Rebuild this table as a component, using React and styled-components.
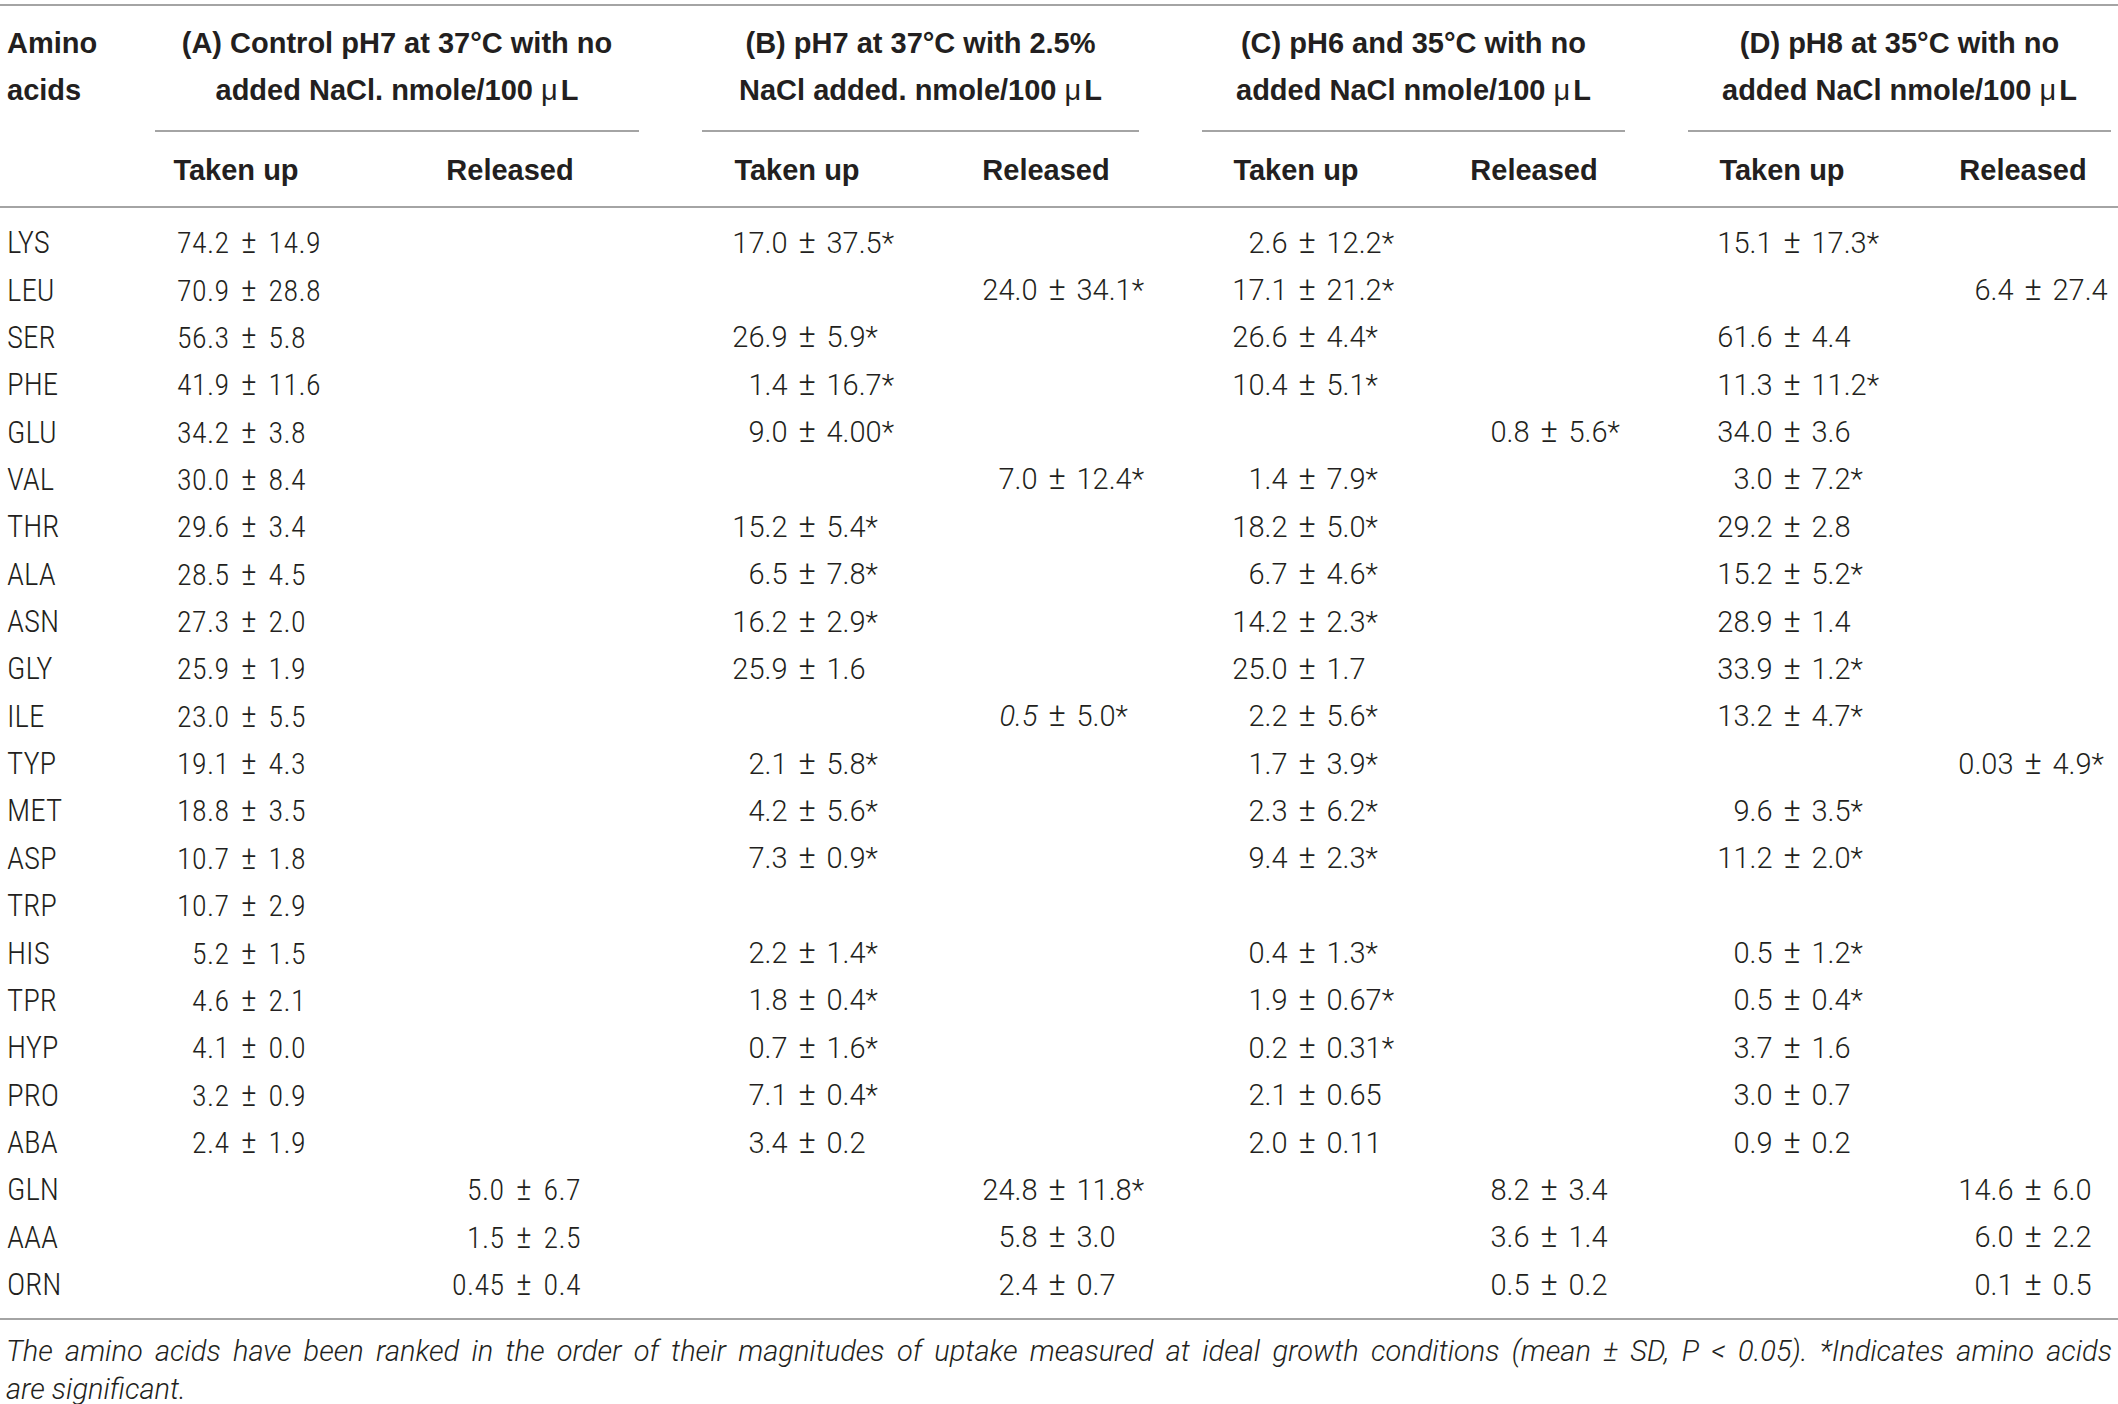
import React from "react";
import styled, { createGlobalStyle } from "styled-components";

const GlobalStyle = createGlobalStyle`
  body {
    margin: 0;
    background: #ffffff;
    color: #231f20;
    font-family: "Liberation Sans", Arial, sans-serif;
  }
`;

const NARROW = `"Liberation Sans Narrow", "Roboto Condensed", "DejaVu Sans Condensed", "Liberation Sans", sans-serif`;
const LIGHT = `Roboto, "Liberation Sans", sans-serif`;
const RULE = "#a4a4a4";
const ROW_H = 47.36;
const PM_W = 39;

// head: centre of sub-header text, vals: centre of the ± sign (both from cell start)
const groups = [
  {
    lines: ["(A) Control pH7 at 37°C with no", "added NaCl. nmole/100 "],
    width: 484,
    taken: 275,
    head: [81, 80],
    vals: [94, 94],
    narrow: true,
  },
  {
    lines: ["(B) pH7 at 37°C with 2.5%", "NaCl added. nmole/100 "],
    width: 437,
    taken: 258,
    head: [95, 86],
    vals: [105, 97],
  },
  {
    lines: ["(C) pH6 and 35°C with no", "added NaCl nmole/100 "],
    width: 423,
    taken: 248,
    head: [94, 84],
    vals: [105, 99],
  },
  {
    lines: ["(D) pH8 at 35°C with no", "added NaCl nmole/100 "],
    width: 423,
    taken: 247,
    head: [94, 88],
    vals: [104, 98],
  },
];

// each row: name, then taken/released pairs for groups A..D
const rows = [
  ["LYS", ["74.2", "14.9"], null, ["17.0", "37.5*"], null, ["2.6", "12.2*"], null, ["15.1", "17.3*"], null],
  ["LEU", ["70.9", "28.8"], null, null, ["24.0", "34.1*"], ["17.1", "21.2*"], null, null, ["6.4", "27.4"]],
  ["SER", ["56.3", "5.8"], null, ["26.9", "5.9*"], null, ["26.6", "4.4*"], null, ["61.6", "4.4"], null],
  ["PHE", ["41.9", "11.6"], null, ["1.4", "16.7*"], null, ["10.4", "5.1*"], null, ["11.3", "11.2*"], null],
  ["GLU", ["34.2", "3.8"], null, ["9.0", "4.00*"], null, null, ["0.8", "5.6*"], ["34.0", "3.6"], null],
  ["VAL", ["30.0", "8.4"], null, null, ["7.0", "12.4*"], ["1.4", "7.9*"], null, ["3.0", "7.2*"], null],
  ["THR", ["29.6", "3.4"], null, ["15.2", "5.4*"], null, ["18.2", "5.0*"], null, ["29.2", "2.8"], null],
  ["ALA", ["28.5", "4.5"], null, ["6.5", "7.8*"], null, ["6.7", "4.6*"], null, ["15.2", "5.2*"], null],
  ["ASN", ["27.3", "2.0"], null, ["16.2", "2.9*"], null, ["14.2", "2.3*"], null, ["28.9", "1.4"], null],
  ["GLY", ["25.9", "1.9"], null, ["25.9", "1.6"], null, ["25.0", "1.7"], null, ["33.9", "1.2*"], null],
  ["ILE", ["23.0", "5.5"], null, null, ["0.5", "5.0*", true], ["2.2", "5.6*"], null, ["13.2", "4.7*"], null],
  ["TYP", ["19.1", "4.3"], null, ["2.1", "5.8*"], null, ["1.7", "3.9*"], null, null, ["0.03", "4.9*"]],
  ["MET", ["18.8", "3.5"], null, ["4.2", "5.6*"], null, ["2.3", "6.2*"], null, ["9.6", "3.5*"], null],
  ["ASP", ["10.7", "1.8"], null, ["7.3", "0.9*"], null, ["9.4", "2.3*"], null, ["11.2", "2.0*"], null],
  ["TRP", ["10.7", "2.9"], null, null, null, null, null, null, null],
  ["HIS", ["5.2", "1.5"], null, ["2.2", "1.4*"], null, ["0.4", "1.3*"], null, ["0.5", "1.2*"], null],
  ["TPR", ["4.6", "2.1"], null, ["1.8", "0.4*"], null, ["1.9", "0.67*"], null, ["0.5", "0.4*"], null],
  ["HYP", ["4.1", "0.0"], null, ["0.7", "1.6*"], null, ["0.2", "0.31*"], null, ["3.7", "1.6"], null],
  ["PRO", ["3.2", "0.9"], null, ["7.1", "0.4*"], null, ["2.1", "0.65"], null, ["3.0", "0.7"], null],
  ["ABA", ["2.4", "1.9"], null, ["3.4", "0.2"], null, ["2.0", "0.11"], null, ["0.9", "0.2"], null],
  ["GLN", null, ["5.0", "6.7"], null, ["24.8", "11.8*"], null, ["8.2", "3.4"], null, ["14.6", "6.0"]],
  ["AAA", null, ["1.5", "2.5"], null, ["5.8", "3.0"], null, ["3.6", "1.4"], null, ["6.0", "2.2"]],
  ["ORN", null, ["0.45", "0.4"], null, ["2.4", "0.7"], null, ["0.5", "0.2"], null, ["0.1", "0.5"]],
];

const Page = styled.div`
  width: 2118px;
`;

const Table = styled.div`
  border-top: 2px solid ${RULE};
  margin-top: 4px;
`;

const Head = styled.div`
  display: flex;
  column-gap: 63px;
  padding-top: 14px;
  border-bottom: 2px solid ${RULE};
`;

const Row = styled.div`
  display: flex;
  column-gap: 63px;
  height: ${ROW_H}px;
  align-items: center;
`;

const Body = styled.div`
  padding: 11px 0 10px;
  border-bottom: 2px solid ${RULE};
`;

const HeadLabel = styled.div`
  width: 92px;
  box-sizing: border-box;
  padding-left: 7px;
  font-weight: 700;
  font-size: 29px;
  line-height: 47px;
`;

const Label = styled.div`
  width: 92px;
  box-sizing: border-box;
  padding-left: 7px;
  font-family: ${NARROW};
  font-size: 31px;
  font-weight: 300;
`;

const HeadGroup = styled.div`
  width: ${(p) => p.$w}px;
  display: flex;
  flex-direction: column;
`;

const GroupTitle = styled.div`
  font-weight: 700;
  font-size: 29px;
  line-height: 47px;
  text-align: center;
  white-space: nowrap;
  padding-bottom: 16px;
  border-bottom: 2px solid ${RULE};
`;

const Mu = styled.span`
  font-weight: 400;
  margin-right: 3px;
`;

const SubRow = styled.div`
  display: grid;
  grid-template-columns: ${(p) => p.$taken}px 1fr;
  padding: 15px 0 12px;
`;

const SubHead = styled.div`
  width: ${(p) => p.$center * 2}px;
  text-align: center;
  font-weight: 700;
  font-size: 29px;
  line-height: 47px;
  white-space: nowrap;
`;

const Group = styled.div`
  width: ${(p) => p.$w}px;
  display: grid;
  grid-template-columns: ${(p) => p.$taken}px 1fr;
`;

const Val = styled.div`
  display: grid;
  grid-template-columns: ${(p) => p.$lead}px ${PM_W}px auto;
  align-items: baseline;
  white-space: nowrap;
  font-family: ${(p) => (p.$narrow ? NARROW : LIGHT)};
  font-weight: 300;
  font-size: ${(p) => (p.$narrow ? 30 : 29)}px;
  letter-spacing: ${(p) => (p.$narrow ? "0.4px" : "0")};
`;

const Lead = styled.span`
  text-align: right;
  font-style: ${(p) => (p.$italic ? "italic" : "normal")};
`;

const Pm = styled.span`
  text-align: center;
  font-size: 1.12em;
  line-height: 1;
`;

const Note = styled.div`
  padding: 12px 6px 0 6px;
  font-family: ${LIGHT};
  font-style: italic;
  font-weight: 300;
  font-size: 29px;
  line-height: 38px;
`;

const NoteLine = styled.div`
  white-space: nowrap;
  text-align: ${(p) => (p.$full ? "justify" : "left")};
  text-align-last: ${(p) => (p.$full ? "justify" : "left")};
`;

function Value({ v, center, narrow }) {
  if (!v) return <div />;
  return (
    <Val $lead={center - PM_W / 2} $narrow={narrow}>
      <Lead $italic={v[2]}>{v[0]}</Lead>
      <Pm>±</Pm>
      <span>{v[1]}</span>
    </Val>
  );
}

export default function App() {
  return (
    <Page>
      <GlobalStyle />
      <Table>
        <Head>
          <HeadLabel>
            Amino
            <br />
            acids
          </HeadLabel>
          {groups.map((g) => (
            <HeadGroup key={g.lines[0]} $w={g.width}>
              <GroupTitle>
                {g.lines[0]}
                <br />
                {g.lines[1]}
                <Mu>μ</Mu>L
              </GroupTitle>
              <SubRow $taken={g.taken}>
                <SubHead $center={g.head[0]}>Taken up</SubHead>
                <SubHead $center={g.head[1]}>Released</SubHead>
              </SubRow>
            </HeadGroup>
          ))}
        </Head>
        <Body>
          {rows.map((r) => (
            <Row key={r[0]}>
              <Label>{r[0]}</Label>
              {groups.map((g, i) => (
                <Group key={i} $w={g.width} $taken={g.taken}>
                  <Value v={r[1 + i * 2]} center={g.vals[0]} narrow={g.narrow} />
                  <Value v={r[2 + i * 2]} center={g.vals[1]} narrow={g.narrow} />
                </Group>
              ))}
            </Row>
          ))}
        </Body>
      </Table>
      <Note>
        <NoteLine $full>
          The amino acids have been ranked in the order of their magnitudes of uptake
          measured at ideal growth conditions (mean ± SD, P &lt; 0.05). *Indicates amino
          acids
        </NoteLine>
        <NoteLine>are significant.</NoteLine>
      </Note>
    </Page>
  );
}
